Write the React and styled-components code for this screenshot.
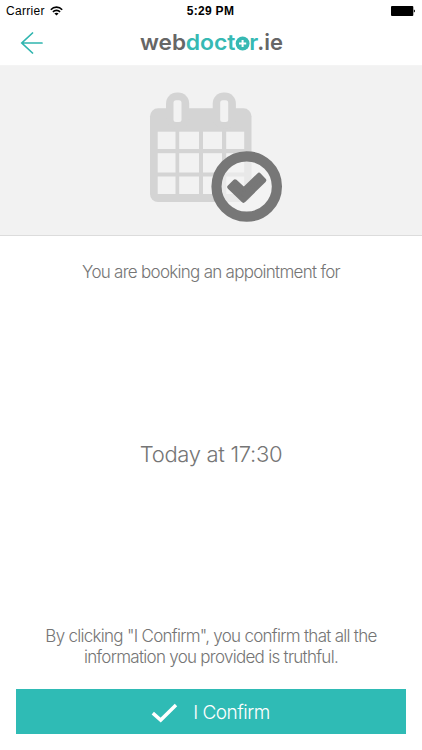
import styled, { createGlobalStyle } from "styled-components";

const GlobalStyle = createGlobalStyle`
    * {
        box-sizing: border-box;
    }
    body {
        margin: 0;
        background: #fff;
        font-family: Inter, "Liberation Sans", sans-serif;
    }
`;

const Screen = styled.div`
    width: 422px;
    height: 750px;
    display: flex;
    flex-direction: column;
    overflow: hidden;
    background: #fff;
`;

const StatusBar = styled.div`
    height: 22px;
    padding: 0 7px 0 6px;
    display: grid;
    grid-template-columns: 1fr auto 1fr;
    align-items: center;
    color: #000;
    font-family: "Liberation Sans", sans-serif;
    font-size: 12px;
`;

const Carrier = styled.div`
    display: flex;
    align-items: center;
    gap: 5px;
    letter-spacing: 0.3px;
`;

const Clock = styled.div`
    font-weight: bold;
    letter-spacing: 0.3px;
`;

const BatterySlot = styled.div`
    display: flex;
    justify-content: flex-end;
`;

const NavBar = styled.header`
    height: 44px;
    display: grid;
    grid-template-columns: 1fr 146px 1fr;
    border-bottom: 1px solid #f4f4f4;
`;

const BackButton = styled.button`
    justify-self: start;
    margin-left: 20px;
    padding: 0;
    height: 42px;
    border: none;
    background: none;
    display: flex;
    align-items: center;
`;

const Hero = styled.section`
    height: 170px;
    display: flex;
    justify-content: center;
    padding: 24px 0 0 10px;
    background: #f2f2f2;
    border-bottom: 1px solid #dcdcdc;
`;

const Content = styled.main`
    flex: 1;
    display: flex;
    flex-direction: column;
    align-items: center;
    color: #757575;
    text-align: center;
`;

const Text = styled.p`
    margin: ${props => props.$margin || '0'};
    font-size: ${props => props.$size || '17px'};
    line-height: ${props => props.$lineHeight || '21px'};
    font-weight: 300;
    letter-spacing: ${props => props.$spacing || '-0.72px'};
    white-space: nowrap;
`;

const ConfirmButton = styled.button`
    width: 390px;
    height: 45px;
    margin: 0 16px 16px;
    padding: 2px 1px 0 0;
    border: none;
    background: #2fbbb5;
    color: #fff;
    font-family: inherit;
    display: flex;
    align-items: center;
    justify-content: center;
    gap: 15px;
`;

const WifiIcon = () => (
    <svg width="13" height="10" viewBox="0 0 13 10" fill="none" stroke="#000" strokeWidth="1.6">
        <path d="M0.8 3.7 C4 0.3 9 0.3 12.2 3.7" />
        <path d="M2.9 5.9 C5 3.8 8 3.8 10.1 5.9" />
        <path d="M6.5 9.6 L4.4 7.5 C5.6 6.4 7.4 6.4 8.6 7.5 Z" fill="#000" stroke="none" />
    </svg>
);

const BatteryIcon = () => (
    <svg width="25" height="10" viewBox="0 0 25 10">
        <rect x="1" y="0" width="22.3" height="10" rx="1" fill="#000" />
        <path d="M23.8 3.4 Q25 3.8 25 5 T23.8 6.6 Z" fill="#000" />
    </svg>
);

const BackArrow = () => (
    <svg width="24" height="22" viewBox="0 0 24 22" fill="none" stroke="#2fb5af" strokeWidth="1.7" strokeLinecap="round">
        <path d="M12.5 1 L1.8 11 L12.5 21 M2 11 H22" />
    </svg>
);

const Logo = () => (
    <svg width="146" height="42" viewBox="138 22 146 42" fontFamily="Inter, sans-serif" fontWeight="600" fontSize="22">
        <text x="140" y="49.5" fill="#666" textLength="46" lengthAdjust="spacingAndGlyphs">web</text>
        <text x="185.7" y="49.5" fill="#36b9b3" textLength="49.8" lengthAdjust="spacingAndGlyphs">doct</text>
        <text x="235.3" y="49.5" fill="#36b9b3" textLength="14.6" lengthAdjust="spacingAndGlyphs">o</text>
        <text x="249.3" y="49.5" fill="#36b9b3" textLength="9" lengthAdjust="spacingAndGlyphs">r</text>
        <text x="257.3" y="49.5" fill="#666" textLength="25.7" lengthAdjust="spacingAndGlyphs">.ie</text>
        <circle cx="242.6" cy="43.5" r="6.9" fill="#36b9b3" />
        <path d="M242.6 39.9 V47.1 M239 43.5 H246.2" stroke="#fff" strokeWidth="2" />
    </svg>
);

const COLUMNS = [[157.7, 17.8], [179.2, 19.8], [203, 19], [226.2, 18]];
const ROWS = [[131.7, 17.3], [153.2, 19.3], [176.5, 17.5]];

const CalendarIcon = () => (
    <svg width="142" height="142" viewBox="145 90 142 142">
        <rect x="150" y="108.3" width="101.5" height="93.7" rx="8" fill="#d4d4d4" />
        {[166, 212.7].map(x => (
            <g key={x}>
                <rect x={x} y="92.5" width="23.2" height="36" rx="11" fill="#d4d4d4" />
                <rect x={x + 7.5} y="100.3" width="8" height="21.7" rx="2.5" fill="#f2f2f2" />
            </g>
        ))}
        {ROWS.map(([y, height]) => COLUMNS.map(([x, width]) => (
            <rect key={`${x}-${y}`} x={x} y={y} width={width} height={height} fill="#f2f2f2" />
        )))}
        <circle cx="246.7" cy="186.5" r="25.5" fill="#f2f2f2" fillOpacity="0.65" />
        <circle cx="246.7" cy="186.5" r="30.2" fill="none" stroke="#777" strokeWidth="10.2" />
        <path d="M229.5 187 L235 181.5 L243.9 189.6 L259 175 L264 180.3 L243.6 200.5 Z" fill="#777" stroke="#777" strokeWidth="4.5" strokeLinejoin="round" />
    </svg>
);

const CheckIcon = () => (
    <svg width="27" height="20" viewBox="0 0 27 20">
        <path d="M1.8 10.2 L9.7 17 L25 2" fill="none" stroke="#fff" strokeWidth="3.5" />
    </svg>
);

export default function App() {
    return (
        <Screen>
            <GlobalStyle />
            <StatusBar>
                <Carrier>Carrier <WifiIcon /></Carrier>
                <Clock>5:29 PM</Clock>
                <BatterySlot><BatteryIcon /></BatterySlot>
            </StatusBar>
            <NavBar>
                <BackButton aria-label="Back"><BackArrow /></BackButton>
                <Logo />
            </NavBar>
            <Hero>
                <CalendarIcon />
            </Hero>
            <Content>
                <Text $margin="26px 0 0">You are booking an appointment for</Text>
                <Text $size="22px" $lineHeight="28px" $spacing="-0.32px" $margin="157px 0 0">Today at 17:30</Text>
                <Text $margin="auto 0 21px">
                    By clicking "I Confirm", you confirm that all the<br />
                    information you provided is truthful.
                </Text>
            </Content>
            <ConfirmButton>
                <CheckIcon />
                <Text as="span" $size="19px" $lineHeight="24px" $spacing="-0.5px">I Confirm</Text>
            </ConfirmButton>
        </Screen>
    );
}
